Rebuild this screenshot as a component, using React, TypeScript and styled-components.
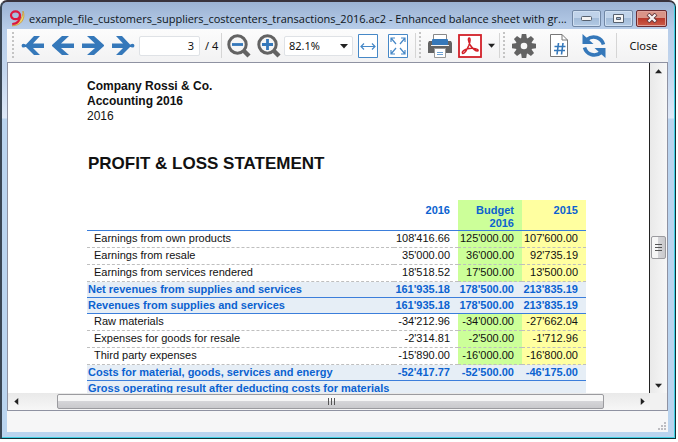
import React from "react";
import styled, { createGlobalStyle } from "styled-components";

const GlobalStyle = createGlobalStyle`
  *, *::before, *::after { box-sizing: border-box; }
  html, body { margin: 0; background: #fff; overflow: hidden; }
  button, input, select { font: inherit; color: inherit; }
`;

const uiFont = `"Noto Sans", "Open Sans", sans-serif`;
const docFont = `"Liberation Sans", Arial, sans-serif`;

const Desktop = styled.div`
  height: 100vh;
  padding: 0 2px 3px 0;
  font-family: ${uiFont};
`;

const Window = styled.section`
  height: 100%;
  display: flex;
  flex-direction: column;
  padding: 0 7px 6px 5px;
  border: 2px solid #20313c;
  border-left-color: #3a4654;
  border-top-color: #38323c;
  border-right: 1px solid #123038;
  border-bottom: 1px solid #123038;
  border-radius: 7px 7px 0 0;
  box-shadow: inset -1px -1px 0 #3fd0e4;
  background: linear-gradient(180deg, #9bb2d3 0, #b7cde9 27px, #c3d6ee 68px, #dfe9f8 116px, #bad4ef 117px);
`;

const TitleBar = styled.header`
  display: flex;
  align-items: center;
  height: 27px;
  flex: none;
  padding: 5px 1px 0 2px;
  gap: 3px;
`;

const Title = styled.h1`
  flex: 1;
  min-width: 0;
  margin: 0;
  padding-top: 2px;
  font: 400 11px/18px "Open Sans", "Noto Sans", sans-serif;
  color: #0c1420;
  white-space: nowrap;
  overflow: hidden;
`;

const CaptionButton = styled.button<{ $danger?: boolean }>`
  width: ${(p) => (p.$danger ? 31 : 29)}px;
  height: 17px;
  flex: none;
  padding: 0;
  display: grid;
  place-items: center;
  border: 1px solid ${(p) => (p.$danger ? "#6b2b31" : "#7187a5")};
  border-radius: 2px;
  box-shadow: inset 0 0 0 1px ${(p) => (p.$danger ? "#e0a49c" : "#cfdff1")};
  background: ${(p) =>
    p.$danger
      ? "linear-gradient(#d99488 0 45%, #b93a2c 50%, #cc5c48)"
      : "linear-gradient(#c0d3ea 0 45%, #a3bcd9 50%, #b3cae4)"};
`;

const ToolBar = styled.div`
  display: flex;
  align-items: center;
  height: 33px;
  flex: none;
  background: linear-gradient(#fcfcfc, #f2f2f3);
  font-size: 11px;
  color: #111;
`;

const ToolGroup = styled.div`
  display: flex;
  align-items: center;
  flex: none;
`;

const MainTools = styled(ToolGroup)`
  padding-left: 4px;
`;

const Grip = styled.span`
  width: 2px;
  height: 27px;
  margin: 0 4px 0 1px;
  background: repeating-linear-gradient(#c4c4c4 0 2px, transparent 2px 4px);
`;

const Separator = styled.span`
  width: 1px;
  height: 25px;
  margin: 0 2px;
  background: #d5d5d5;
`;

const ToolButton = styled.button<{ $narrow?: boolean }>`
  width: ${(p) => (p.$narrow ? 12 : 30)}px;
  height: 28px;
  padding: 0;
  border: 0;
  background: none;
  display: grid;
  place-items: center;
  svg { display: block; }
`;

const Settings = styled(ToolGroup)`
  ${Grip} { margin-right: 1px; }
  ${ToolButton} { width: 35px; }
  ${Separator} { margin-left: 5px; }
`;

const CloseButton = styled.button`
  flex: 1;
  border: 0;
  padding: 0;
  background: none;
  line-height: 16px;
`;

const PageInput = styled.input`
  width: 61px;
  height: 20px;
  margin: 0 5px 0 1px;
  padding: 0 5px;
  border: 1px solid #dfe2e6;
  border-radius: 2px;
  background: #fff;
  text-align: right;
`;

const PageCount = styled.span`
  width: 14px;
  white-space: nowrap;
`;

const Combo = styled.span`
  display: grid;
  align-items: center;
  width: 69px;
  select, svg { grid-area: 1 / 1; }
  svg { justify-self: end; margin-right: 5px; pointer-events: none; }
`;

const ZoomSelect = styled.select`
  width: 100%;
  height: 20px;
  padding: 0 4px;
  appearance: none;
  border: 1px solid #dfe2e6;
  border-radius: 2px;
  background: #fff;
`;

const Body = styled.div`
  flex: 1;
  min-height: 0;
  display: grid;
  grid-template-columns: minmax(0, 1fr) 17px;
  grid-template-rows: minmax(0, 1fr) 17px;
  border: 1px solid #8f92a2;
  background: #f1f1f1;
`;

const Sheet = styled.main`
  overflow: hidden;
  padding: 16px 63px 0 79px;
  border-right: 1px solid #222;
  background: #fff;
  font-family: ${docFont};
  color: #111;
`;

const DocLine = styled.p<{ $bold?: boolean }>`
  margin: 0;
  font-size: 12px;
  line-height: 15px;
  font-weight: ${(p) => (p.$bold ? 700 : 400)};
`;

const DocTitle = styled.h2`
  margin: 30px 0 26px;
  padding-left: 1px;
  font-size: 17px;
  line-height: 20px;
`;

const Statement = styled.table`
  width: 100%;
  table-layout: fixed;
  border-collapse: separate;
  border-spacing: 0;
  font-size: 11px;
  line-height: 13px;
`;

type Tone = "plain" | "budget" | "previous";
const toneColor: Record<Tone, string> = {
  plain: "transparent",
  budget: "#ccff99",
  previous: "#ffffa0",
};

const ValueCol = styled.col`
  width: 64px;
`;

const HeadCell = styled.th<{ $tone: Tone }>`
  height: 31px;
  padding: 4px 8px 0 0;
  vertical-align: top;
  text-align: right;
  color: #0b62d0;
  background: ${(p) => toneColor[p.$tone]};
  border-bottom: 1px solid #3b7edb;
`;

const Row = styled.tr<{ $total?: boolean }>`
  height: ${(p) => (p.$total ? 16 : 17)}px;
  color: ${(p) => (p.$total ? "#0b62d0" : "#111")};
  background: ${(p) => (p.$total ? "#e6eef6" : "transparent")};
  font-weight: ${(p) => (p.$total ? 700 : 400)};
  th, td {
    vertical-align: top;
    border-bottom: 1px ${(p) => (p.$total ? "solid #3b7edb" : "dashed #bfbfbf")};
  }
`;

const LabelCell = styled.th<{ $total?: boolean }>`
  padding: 1px 0 0 ${(p) => (p.$total ? 1 : 7)}px;
  text-align: left;
  font-weight: inherit;
  white-space: nowrap;
`;

const ValueCell = styled.td<{ $tone: Tone }>`
  padding: 1px 8px 0 0;
  text-align: right;
  white-space: nowrap;
  background: ${(p) => toneColor[p.$tone]};
`;

const Scrollbar = styled.div<{ $vertical?: boolean }>`
  display: flex;
  flex-direction: ${(p) => (p.$vertical ? "column" : "row")};
  align-items: stretch;
  padding: ${(p) => (p.$vertical ? "0 1px" : "1px 0")};
  background: linear-gradient(${(p) => (p.$vertical ? "90deg" : "180deg")}, #e9e9e9, #f7f7f7);
`;

const ScrollArrow = styled.button`
  flex: 0 0 16px;
  padding: 0;
  border: 0;
  background: none;
  display: grid;
  place-items: center;
`;

const Track = styled.span<{ $share: number }>`
  flex: ${(p) => p.$share} 1 0;
`;

const Thumb = styled.span<{ $vertical?: boolean; $share?: number }>`
  flex: ${(p) => (p.$share ? `${p.$share} 1 0` : "0 0 23px")};
  display: grid;
  place-items: center;
  border: 1px solid #9b9b9f;
  border-radius: 2px;
  background: linear-gradient(${(p) => (p.$vertical ? "90deg" : "180deg")}, #f6f6f6 0 45%, #d5d5d8 50%, #c9c9cc);
`;

const StatusBar = styled.footer`
  flex: none;
  height: 21px;
  display: flex;
  justify-content: flex-end;
  align-items: flex-end;
  padding: 2px;
  background: #f6f6f7;
`;

const blue = "#3578ba";
const gray = "#636363";

const Arrow = ({ flip, end }: { flip?: boolean; end?: boolean }) => (
  <svg width="24" height="20" viewBox="0 0 24 20">
    <g transform={flip ? "translate(24 0) scale(-1 1)" : undefined}>
      <path
        d={end ? "M13 0H19L12 7.5H23V12H12L19 19H13L5 11H2V8.5H5Z" : "M11 0H18L10 7.5H23V12H10L18 19H11L1 10V9Z"}
        fill={blue}
      />
      {end && <circle cx="2.5" cy="9.7" r="1.9" fill={blue} />}
    </g>
  </svg>
);

const Magnifier = ({ plus }: { plus?: boolean }) => (
  <svg width="24" height="24" viewBox="0 0 24 24" fill="none">
    <path d="M16 16L22 22" stroke={gray} strokeWidth="4.4" />
    <circle cx="10.5" cy="10.5" r="8.7" stroke={gray} strokeWidth="3" fill="#f6f6f6" />
    <path d={plus ? "M5 10.5H16M10.5 5V16" : "M5 10.5H16"} stroke={blue} strokeWidth="2.8" />
  </svg>
);

const FitWidth = () => (
  <svg width="20" height="24" viewBox="0 0 20 24" fill="none" stroke="#4688c7">
    <path d="M.5 .5H19.5V23.5H.5Z" fill="#fff" />
    <path d="M3 12.5H17M6 9.5L3 12.5L6 15.5M14 9.5L17 12.5L14 15.5" strokeWidth="1.2" />
  </svg>
);

const FitPage = () => (
  <svg width="20" height="24" viewBox="0 0 20 24" fill="none" stroke="#4688c7">
    <path d="M.5 .5H19.5V23.5H.5Z" fill="#fff" />
    <path
      d="M3 8V4H7M3 4L8 10M13 4H17V8M17 4L12 10M3 16V20H7M3 20L8 14M13 20H17V16M17 20L12 14"
      strokeWidth="1.2"
    />
  </svg>
);

const Printer = () => (
  <svg width="24" height="24" viewBox="0 0 24 24">
    <path d="M5.5 .5H18.5V6H5.5Z" fill="#fff" stroke="#888" />
    <path d="M1 7H5V11H19V7H23L24 9V19H0V9Z" fill={gray} />
    <rect x="4" y="5" width="16" height="6" rx="1" fill={blue} />
    <path d="M3 11.5H21" stroke="#f6f6f6" />
    <path d="M6.5 14.5H17.5V23.5H6.5Z" fill="#fff" stroke="#999" />
    <path d="M9 18.5H15M9 20.5H15" stroke="#6ca0d2" />
  </svg>
);

const Pdf = () => (
  <svg width="24" height="24" viewBox="0 0 24 24" fill="none" stroke="#d22028">
    <rect x="1" y="1" width="22" height="22" fill="#fff" strokeWidth="1.8" />
    <path
      d="M11.2 4C9.8 4 10.2 7.5 12.5 11.5C14.5 14.5 18 17.5 20 16.8C21.2 15 15 13.6 9.5 14.8C6 15.6 3.5 18 4.5 19.3C6.5 20.3 9 15.5 10.8 11.5C12.2 8 12.6 4 11.2 4Z"
      strokeWidth="1.5"
    />
  </svg>
);

const Gear = () => (
  <svg width="24" height="24" viewBox="-12 -12 24 24">
    {[0, 45, 90, 135].map((a) => (
      <path key={a} d="M-2.2 -12H2.2L3 -7V7L2.2 12H-2.2L-3 7V-7Z" transform={`rotate(${a})`} fill={gray} />
    ))}
    <circle r="8.3" fill={gray} />
    <circle r="3.3" fill="#f7f7f7" />
  </svg>
);

const PageNumber = () => (
  <svg width="18" height="23" viewBox="0 0 18 23" fill="none">
    <path d="M.5 .5H12L17.5 6V22.5H.5Z" fill="#fff" stroke="#777" />
    <path d="M12 .5V6H17.5" stroke="#777" />
    <path d="M8.5 9L7 20.5M13 9L11.5 20.5M4.5 12.5H15.5M4 16.5H15" stroke={blue} strokeWidth="1.6" />
  </svg>
);

const Refresh = () => (
  <svg width="24" height="24" viewBox="0 0 24 24" fill="none">
    <path d="M5 5.5C11 .5 19.5 3.5 21.5 10.5" stroke={blue} strokeWidth="3.6" />
    <path d="M.5 0V10H11.5Z" fill={blue} />
    <path d="M19 18.5C13 23.5 4.5 20.5 2.5 13.5" stroke={blue} strokeWidth="3.6" />
    <path d="M23.5 24V14H12.5Z" fill={blue} />
  </svg>
);

const Logo = () => (
  <svg width="17" height="17" viewBox="0 0 17 17" fill="none">
    <path d="M14 1C17 8 12.5 16 3 15.8C9.5 14 14 8 14 1Z" fill="#f2d36b" stroke="#c69a3e" strokeWidth=".8" />
    <ellipse cx="6.5" cy="5.3" rx="4.5" ry="3.9" stroke="#dc1740" strokeWidth="2.2" />
    <path d="M11 4.5C11.6 9.5 9 13.8 3.2 14" stroke="#dc1740" strokeWidth="2.2" />
  </svg>
);

const Caret = ({ size = 7, turn = 0 }: { size?: number; turn?: number }) => (
  <svg width={size} height={size} viewBox="0 0 8 8">
    <path d="M0 2H8L4 6.5Z" fill="#222" transform={`rotate(${turn} 4 4)`} />
  </svg>
);

const ThumbLines = ({ turn = 0 }: { turn?: number }) => (
  <svg width="8" height="8" viewBox="0 0 8 8">
    <path d="M0 .5H7M0 3.5H7M0 6.5H7" stroke="#555" transform={`rotate(${turn} 4 4)`} />
  </svg>
);

const SizeGrip = () => (
  <svg width="9" height="9" viewBox="0 0 9 9" fill="#bdbdc2">
    <path d="M7 1h2v2h-2zM4 4h2v2h-2zM7 4h2v2h-2zM1 7h2v2h-2zM4 7h2v2h-2zM7 7h2v2h-2z" />
  </svg>
);

interface Entry {
  label: string;
  values: string[];
  total?: boolean;
}

const entries: Entry[] = [
  { label: "Earnings from own products", values: ["108'416.66", "125'000.00", "107'600.00"] },
  { label: "Earnings from resale", values: ["35'000.00", "36'000.00", "92'735.19"] },
  { label: "Earnings from services rendered", values: ["18'518.52", "17'500.00", "13'500.00"] },
  { label: "Net revenues from supplies and services", values: ["161'935.18", "178'500.00", "213'835.19"], total: true },
  { label: "Revenues from supplies and services", values: ["161'935.18", "178'500.00", "213'835.19"], total: true },
  { label: "Raw materials", values: ["-34'212.96", "-34'000.00", "-27'662.04"] },
  { label: "Expenses for goods for resale", values: ["-2'314.81", "-2'500.00", "-1'712.96"] },
  { label: "Third party expenses", values: ["-15'890.00", "-16'000.00", "-16'800.00"] },
  { label: "Costs for material, goods, services and energy", values: ["-52'417.77", "-52'500.00", "-46'175.00"], total: true },
  { label: "Gross operating result after deducting costs for materials", values: ["", "", ""], total: true },
];

const tones: Tone[] = ["plain", "budget", "previous"];

export default function App() {
  return (
    <Desktop>
      <GlobalStyle />
      <Window>
        <TitleBar>
          <Logo />
          <Title>
            example_file_customers_suppliers_costcenters_transactions_2016.ac2 - Enhanced balance sheet with gr...
          </Title>
          <CaptionButton aria-label="Minimize">
            <svg width="11" height="5" viewBox="0 0 11 5">
              <rect x=".5" y=".5" width="10" height="4" rx="1" fill="#f2f2f2" stroke="#56606e" />
            </svg>
          </CaptionButton>
          <CaptionButton aria-label="Maximize">
            <svg width="11" height="9" viewBox="0 0 11 9">
              <path d="M.5 .5H10.5V8.5H.5Z" fill="#f6f6f6" stroke="#56606e" />
              <path d="M3.5 3.5H7.5V5.5H3.5Z" fill="#9fb6d3" stroke="#56606e" />
            </svg>
          </CaptionButton>
          <CaptionButton $danger aria-label="Close window">
            <svg width="12" height="10" viewBox="0 0 12 10">
              <path d="M2 1L10 9M10 1L2 9" stroke="#61363a" strokeWidth="4" />
              <path d="M2.5 1.5L9.5 8.5M9.5 1.5L2.5 8.5" stroke="#f6f2f2" strokeWidth="2.4" />
            </svg>
          </CaptionButton>
        </TitleBar>

        <ToolBar role="toolbar">
          <MainTools>
            <Grip />
            <ToolButton aria-label="First page"><Arrow end /></ToolButton>
            <ToolButton aria-label="Previous page"><Arrow /></ToolButton>
            <ToolButton aria-label="Next page"><Arrow flip /></ToolButton>
            <ToolButton aria-label="Last page"><Arrow flip end /></ToolButton>
            <PageInput aria-label="Page" defaultValue="3" />
            <PageCount>/ 4</PageCount>
            <Separator />
            <ToolButton aria-label="Zoom out"><Magnifier /></ToolButton>
            <ToolButton aria-label="Zoom in"><Magnifier plus /></ToolButton>
            <Combo>
              <ZoomSelect aria-label="Zoom" defaultValue="82.1%">
                <option>82.1%</option>
              </ZoomSelect>
              <Caret size={8} />
            </Combo>
            <ToolButton aria-label="Fit width"><FitWidth /></ToolButton>
            <ToolButton aria-label="Fit page"><FitPage /></ToolButton>
            <Separator />
          </MainTools>
          <ToolGroup>
            <Grip />
            <ToolButton aria-label="Print"><Printer /></ToolButton>
            <ToolButton aria-label="Export PDF"><Pdf /></ToolButton>
            <ToolButton $narrow aria-label="Export options"><Caret /></ToolButton>
            <Separator />
          </ToolGroup>
          <Settings>
            <Grip />
            <ToolButton aria-label="Settings"><Gear /></ToolButton>
            <ToolButton aria-label="Page numbers"><PageNumber /></ToolButton>
            <ToolButton aria-label="Refresh"><Refresh /></ToolButton>
            <Separator />
          </Settings>
          <CloseButton>Close</CloseButton>
        </ToolBar>

        <Body>
          <Sheet>
            <DocLine $bold>Company Rossi &amp; Co.</DocLine>
            <DocLine $bold>Accounting 2016</DocLine>
            <DocLine>2016</DocLine>
            <DocTitle>PROFIT &amp; LOSS STATEMENT</DocTitle>
            <Statement>
              <colgroup>
                <col />
                <ValueCol />
                <ValueCol />
                <ValueCol />
              </colgroup>
              <thead>
                <tr>
                  <HeadCell $tone="plain" aria-label="Item" />
                  <HeadCell $tone="plain">2016</HeadCell>
                  <HeadCell $tone="budget">Budget 2016</HeadCell>
                  <HeadCell $tone="previous">2015</HeadCell>
                </tr>
              </thead>
              <tbody>
                {entries.map((e) => (
                  <Row key={e.label} $total={e.total}>
                    <LabelCell scope="row" $total={e.total}>{e.label}</LabelCell>
                    {e.values.map((v, i) => (
                      <ValueCell key={i} $tone={e.total ? "plain" : tones[i]}>{v}</ValueCell>
                    ))}
                  </Row>
                ))}
              </tbody>
            </Statement>
          </Sheet>
          <Scrollbar $vertical>
            <ScrollArrow aria-label="Scroll up"><Caret turn={180} /></ScrollArrow>
            <Track $share={157} />
            <Thumb $vertical><ThumbLines /></Thumb>
            <Track $share={118} />
            <ScrollArrow aria-label="Scroll down"><Caret /></ScrollArrow>
          </Scrollbar>
          <Scrollbar>
            <ScrollArrow aria-label="Scroll left"><Caret turn={90} /></ScrollArrow>
            <Track $share={33} />
            <Thumb $share={546}><ThumbLines turn={90} /></Thumb>
            <Track $share={30} />
            <ScrollArrow aria-label="Scroll right"><Caret turn={270} /></ScrollArrow>
          </Scrollbar>
        </Body>
        <StatusBar><SizeGrip /></StatusBar>
      </Window>
    </Desktop>
  );
}
